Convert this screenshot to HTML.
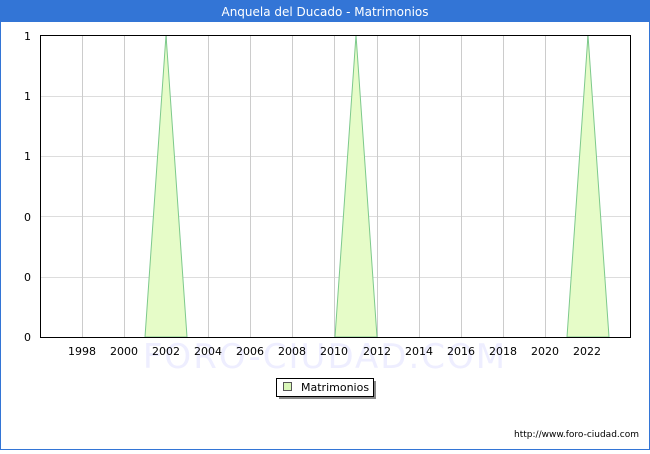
<!DOCTYPE html>
<html><head><style>
body{margin:0;width:650px;height:450px;overflow:hidden;font-family:"DejaVu Sans","Liberation Sans",sans-serif;}
</style></head><body>
<svg width="650" height="450" xmlns="http://www.w3.org/2000/svg" font-family="DejaVu Sans, Liberation Sans, sans-serif">
<rect x="0" y="0" width="650" height="450" fill="#fff"/>
<rect x="0.5" y="0.5" width="649" height="449" fill="none" stroke="#3375d6"/>
<rect x="0" y="0" width="650" height="22" fill="#3375d6"/>
<text x="325" y="16" fill="#fff" font-size="12" text-anchor="middle">Anquela del Ducado - Matrimonios</text>
<g stroke="#ddd" stroke-width="1">
<line x1="40" y1="96.5" x2="630" y2="96.5"/>
<line x1="40" y1="156.5" x2="630" y2="156.5"/>
<line x1="40" y1="216.5" x2="630" y2="216.5"/>
<line x1="40" y1="277.5" x2="630" y2="277.5"/>
</g>
<g stroke="#ccc" stroke-width="1">
<line x1="82.5" y1="35" x2="82.5" y2="337"/>
<line x1="124.5" y1="35" x2="124.5" y2="337"/>
<line x1="166.5" y1="35" x2="166.5" y2="337"/>
<line x1="208.5" y1="35" x2="208.5" y2="337"/>
<line x1="250.5" y1="35" x2="250.5" y2="337"/>
<line x1="292.5" y1="35" x2="292.5" y2="337"/>
<line x1="334.5" y1="35" x2="334.5" y2="337"/>
<line x1="377.5" y1="35" x2="377.5" y2="337"/>
<line x1="419.5" y1="35" x2="419.5" y2="337"/>
<line x1="461.5" y1="35" x2="461.5" y2="337"/>
<line x1="503.5" y1="35" x2="503.5" y2="337"/>
<line x1="545.5" y1="35" x2="545.5" y2="337"/>
<line x1="587.5" y1="35" x2="587.5" y2="337"/>
</g>
<text x="325" y="368" fill="#eef" font-size="34" text-anchor="middle" letter-spacing="2">FORO-CIUDAD.COM</text>
<g fill="#e6fcc8" stroke="#7dc98c" stroke-width="1">
<polygon points="145,337 166,35 187,337"/>
<polygon points="335,337 356,35 377,337"/>
<polygon points="567,337 588,35 609,337"/>
</g>
<rect x="40.5" y="35.5" width="590" height="302" fill="none" stroke="#000"/>
<g font-size="11" fill="#000" text-anchor="end">
<text x="31" y="40">1</text><text x="31" y="100">1</text><text x="31" y="160">1</text>
<text x="31" y="221">0</text><text x="31" y="281">0</text><text x="31" y="341">0</text>
</g>
<g font-size="11" fill="#000" text-anchor="middle">
<text x="82" y="355">1998</text><text x="124" y="355">2000</text><text x="166" y="355">2002</text>
<text x="208" y="355">2004</text><text x="250" y="355">2006</text><text x="292" y="355">2008</text>
<text x="334" y="355">2010</text><text x="377" y="355">2012</text><text x="419" y="355">2014</text>
<text x="461" y="355">2016</text><text x="503" y="355">2018</text><text x="545" y="355">2020</text>
<text x="587" y="355">2022</text>
</g>
<rect x="279" y="381" width="97" height="18" fill="#888"/>
<rect x="276.5" y="378.5" width="97" height="18" fill="#fff" stroke="#000"/>
<rect x="283.5" y="382.5" width="8" height="8" fill="#d9f7b8" stroke="#555"/>
<text x="301" y="391" font-size="11" fill="#000">Matrimonios</text>
<text x="639" y="437" font-size="9" fill="#000" text-anchor="end">http://www.foro-ciudad.com</text>
</svg>
</body></html>
